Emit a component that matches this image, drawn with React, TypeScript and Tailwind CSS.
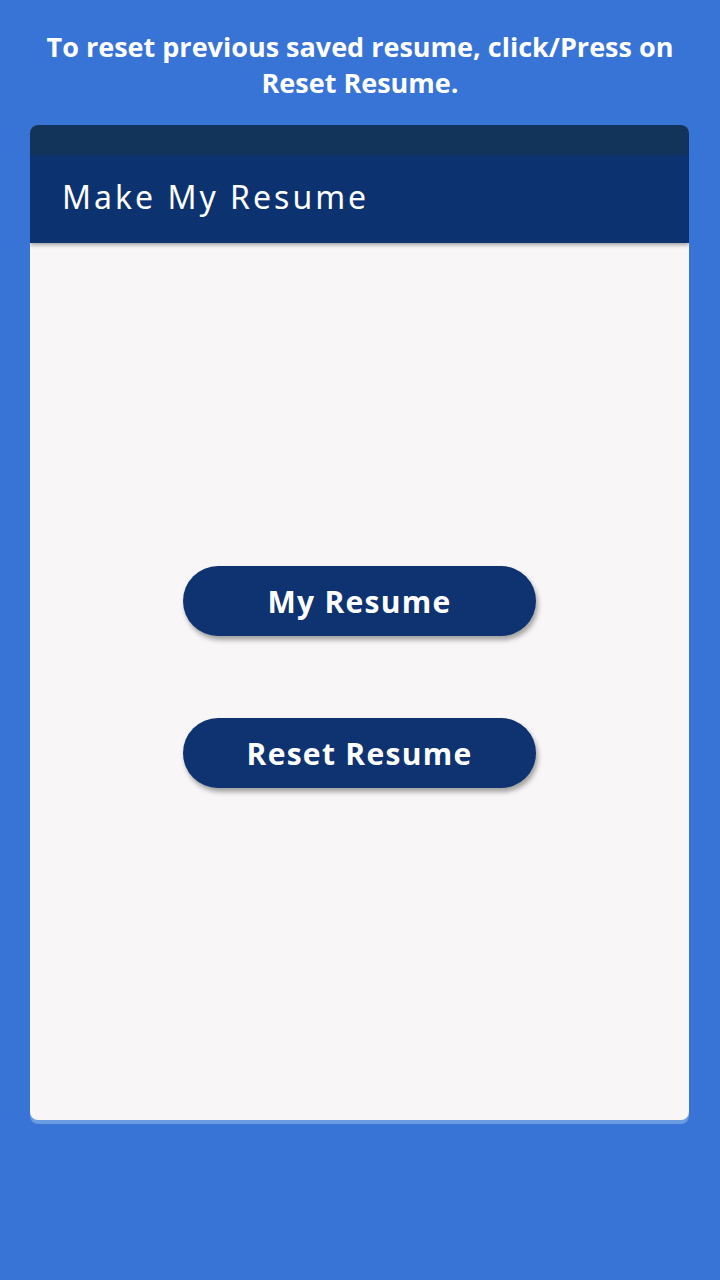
export default function App() {
  return (
    <div className="w-[720px] h-[1280px] bg-[#3873d6] flex flex-col" style={{ fontFamily: '"Open Sans", "Noto Sans", sans-serif' }}>
      {/* Hint */}
      <p className="mt-[29px] px-8 text-center text-white font-bold text-[27px] leading-[36px]">
        To reset previous saved resume, click/Press on Reset Resume.
      </p>

      {/* Phone card */}
      <div className="mt-[24px] ml-[30px] w-[659px] h-[999px] rounded-[8px] bg-[#6b9be0] overflow-hidden flex flex-col">
        <div className="h-[30px] bg-[#12345a]" />
        <div className="h-[88px] bg-[#0d3270] flex items-center pl-[32px] shadow-[0_2px_4px_rgba(0,0,0,0.35)] z-10">
          <h1 className="text-white text-[32px] tracking-[3px] mt-[-4px]" style={{ fontFamily: '"Noto Sans", sans-serif' }}>
            Make My Resume
          </h1>
        </div>
        <div className="h-[877px] bg-[#f8f6f6] rounded-b-[8px] flex flex-col items-center pt-[323px] gap-[82px]">
          {["My Resume", "Reset Resume"].map((label) => (
            <button key={label}
              className="w-[353px] h-[70px] rounded-full bg-[#0e3370] text-white font-bold text-[30px] tracking-[1.3px] shadow-[2px_4px_5px_rgba(0,0,0,0.35)]">
              {label}
            </button>
          ))}
        </div>
      </div>
    </div>
  );
}
